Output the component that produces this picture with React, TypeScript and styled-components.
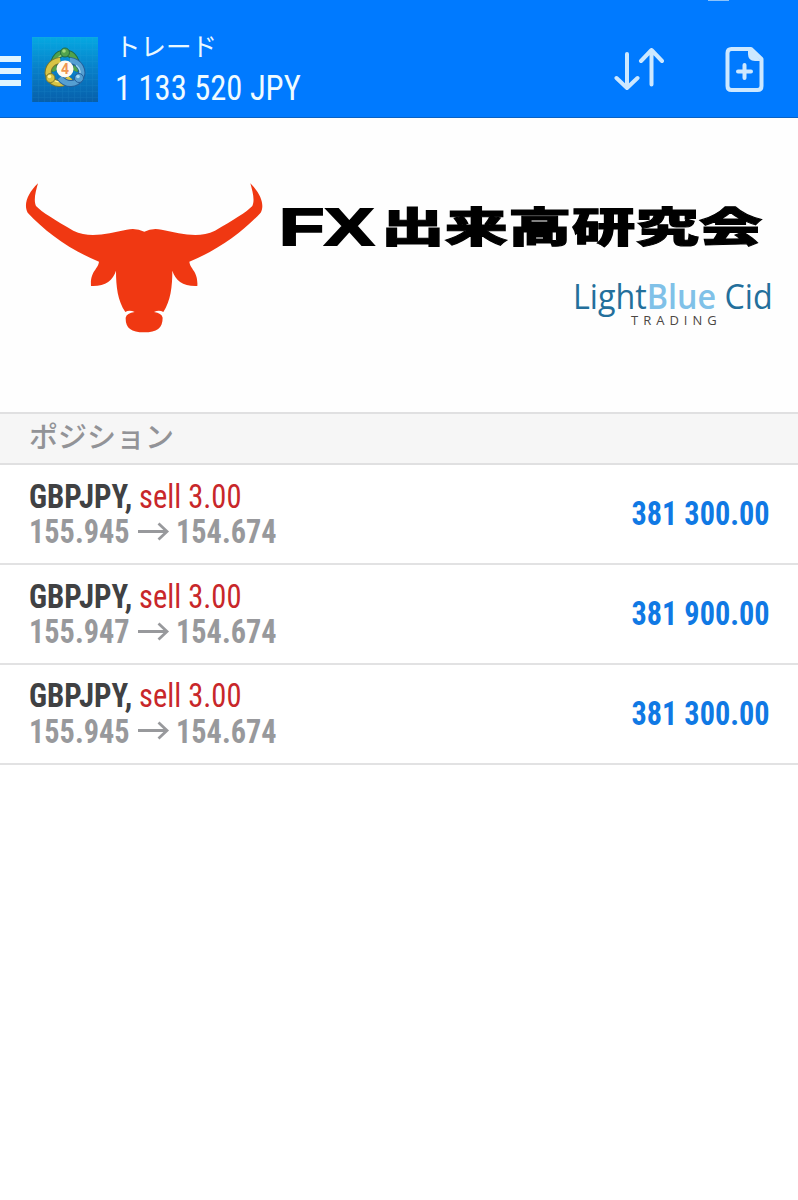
import React from "react";
import styled, { createGlobalStyle } from "styled-components";

const Global = createGlobalStyle`
  *, *::before, *::after { box-sizing: border-box; }
  body {
    margin: 0;
    background: #fff;
    font-family: Roboto, "Noto Sans CJK JP", sans-serif;
  }
`;

const Screen = styled.div`
  width: 798px;
  height: 1200px;
  background: #fff;
  overflow: hidden;
`;

const Header = styled.header`
  display: flex;
  height: 118px;
  background: #007aff;
  border-bottom: 1px solid #0a62c4;
  position: relative;
`;

const StatusMark = styled.i`
  position: absolute;
  top: 0;
  left: 708px;
  width: 21px;
  height: 1px;
  background: #8cc3fb;
`;

const Menu = styled.button`
  display: flex;
  flex-direction: column;
  gap: 6px;
  width: 21px;
  margin: 56px 11px 0 0;
  padding: 0;
  border: 0;
  background: none;
`;

const MenuBar = styled.span`
  height: 6px;
  background: #dff5ff;
`;

const AppIcon = styled.svg`
  width: 66px;
  height: 65px;
  margin-top: 37px;
`;

const Account = styled.div`
  display: flex;
  flex-direction: column;
  margin: 29px 0 0 17px;
  width: 480px;
  color: #e9f8ff;
`;

const Caption = styled.div`
  font: 400 25.5px/31px "Noto Sans CJK JP", sans-serif;
  white-space: nowrap;
`;

const Condensed = styled.span<{ $scale: number; $origin?: string }>`
  display: inline-block;
  white-space: pre;
  transform: scaleX(${(p) => p.$scale});
  transform-origin: ${(p) => p.$origin ?? "left"} center;
`;

const Balance = styled.div`
  height: 50px;
  font-size: 35px;
  line-height: 58px;
  font-stretch: 75%;
  color: #f0fbff;
`;

const Actions = styled.div`
  display: flex;
  gap: 60px;
  margin: 45px 0 0 17px;
`;

const Icon = styled.svg`
  flex: none;
  display: block;
`;

const Banner = styled.section`
  display: flex;
  height: 294px;
  background: #fefefe;
`;

const BullLogo = styled.svg`
  flex: none;
  width: 270px;
  height: 175px;
  margin: 52px 0 0 10px;
`;

const Brand = styled.div`
  flex: 1;
  display: flex;
  flex-direction: column;
  padding-top: 75px;
`;

const Title = styled.div`
  display: flex;
  height: 72px;
  margin-left: -1px;
  color: #000;
  line-height: 63px;
`;

const Latin = styled.span`
  width: 102px;
  font-family: "Liberation Sans", sans-serif;
  font-weight: 700;
  font-size: 52px;
  line-height: 68px;
  white-space: nowrap;
  -webkit-text-stroke: 1.8px #000;
`;

const Kanji = styled.span`
  font-family: "Noto Sans CJK JP", sans-serif;
  font-weight: 900;
  font-size: 41px;
  -webkit-text-stroke: 1px #000;
`;

const Partner = styled.div`
  height: 48px;
  padding-left: 293px;
  font-family: "Open Sans", sans-serif;
  font-size: 34.5px;
  font-weight: 500;
  line-height: 62px;
  color: #236f9b;
  white-space: nowrap;

  b {
    font-weight: 600;
    color: #80c1e8;
  }
`;

const PartnerSub = styled.div`
  margin-top: -1px;
  padding-left: 351px;
  font: 400 13px/16px "Open Sans", sans-serif;
  letter-spacing: 5px;
  color: #4c4744;
`;

const SectionTitle = styled.h2`
  height: 53px;
  margin: 0;
  padding-left: 29px;
  border-top: 2px solid #e0e0e1;
  border-bottom: 2px solid #e0e0e1;
  background: #f6f6f6;
  color: #929397;
  font: 500 29px/42px "Noto Sans CJK JP", sans-serif;
`;

const Row = styled.div`
  display: flex;
  justify-content: space-between;
  align-items: center;
  height: 99.9px;
  padding: 0 28px 0 29px;
  border-bottom: 2px solid #e2e2e3;
`;

const Line = styled.div`
  display: flex;
  align-items: center;
  height: 35.5px;
  font-size: 33px;
  font-stretch: 75%;
`;

const Cell = styled.span<{ $w: number; $color: string; $bold?: boolean }>`
  width: ${(p) => p.$w}px;
  color: ${(p) => p.$color};
  font-weight: ${(p) => (p.$bold ? 700 : 400)};
  white-space: nowrap;
`;

const Profit = styled.div`
  display: flex;
  justify-content: flex-end;
  width: 170px;
  font-size: 33px;
  font-weight: 700;
  font-stretch: 75%;
  color: #1079e4;
`;

const positions = [
  { open: "155.945", profit: "381 300.00" },
  { open: "155.947", profit: "381 900.00" },
  { open: "155.945", profit: "381 300.00" },
];

const Position = ({ open, profit }: { open: string; profit: string }) => (
  <Row>
    <div>
      <Line>
        <Cell $w={110} $color="#404143" $bold><Condensed $scale={0.932}>GBPJPY,</Condensed></Cell>
        <Cell $w={110} $color="#c8272a"><Condensed $scale={0.925}>sell 3.00</Condensed></Cell>
      </Line>
      <Line>
        <Cell $w={108} $color="#98999c" $bold><Condensed $scale={0.917}>{open}</Condensed></Cell>
        <Icon width="39" height="24" viewBox="0 0 39 24" fill="none" stroke="#98999c" strokeWidth="2.8">
          <path d="M1 11.5H30M21.5 3.5L30 11.5L21.5 19.5" />
        </Icon>
        <Cell $w={110} $color="#98999c" $bold><Condensed $scale={0.917}>154.674</Condensed></Cell>
      </Line>
    </div>
    <Profit><Condensed $scale={0.917} $origin="right">{profit}</Condensed></Profit>
  </Row>
);

const Ring = ({ x, y, angle, fill, dark, light }: { x: number; y: number; angle: number; fill: string; dark: string; light: string }) => (
  <g transform={`translate(${x} ${y}) rotate(${angle})`}>
    <path d="M-10 9C-14 -1 -8 -9 0 -9S14 -1 10 9" fill="none" stroke={dark} strokeWidth="7" />
    <path d="M-10 9C-14 -1 -8 -9 0 -9S14 -1 10 9" fill="none" stroke={fill} strokeWidth="5" />
    <path d="M-9 1C-8 -5 -4 -7 -1 -7" fill="none" stroke={light} strokeWidth="1.4" />
  </g>
);

const Bead = ({ x, y, fill, dark, light }: { x: number; y: number; fill: string; dark: string; light: string }) => (
  <g>
    <circle cx={x} cy={y} r="4.5" fill={fill} stroke={dark} />
    <circle cx={x - 1} cy={y - 1.5} r="1.8" fill={light} />
  </g>
);

export default function App() {
  return (
    <Screen>
      <Global />
      <Header>
        <StatusMark />
        <Menu aria-label="menu"><MenuBar /><MenuBar /><MenuBar /></Menu>
        <AppIcon viewBox="0 0 66 65">
          <defs>
            <linearGradient id="sky" x1="0.5" y1="0" x2="0.5" y2="1">
              <stop offset="0" stopColor="#05a9e2" />
              <stop offset="0.5" stopColor="#087fc8" />
              <stop offset="1" stopColor="#075faa" />
            </linearGradient>
            <pattern id="mesh" width="6" height="6" patternUnits="userSpaceOnUse">
              <path d="M0 .5H6M.5 0V6" stroke="#35aee3" strokeWidth=".6" opacity=".16" />
            </pattern>
          </defs>
          <rect width="66" height="65" fill="url(#sky)" />
          <rect width="66" height="65" fill="url(#mesh)" />
          <Ring x={33} y={25} angle={0} fill="#51a34c" dark="#216a46" light="#a2d77c" />
          <Ring x={25.500} y={36.500} angle={-120} fill="#d8c445" dark="#75752f" light="#fff39a" />
          <Ring x={40.500} y={36.500} angle={120} fill="#559fd2" dark="#245f9b" light="#a8dcf4" />
          <Bead x={33} y={15.500} fill="#51a34c" dark="#216a46" light="#a2d77c" />
          <Bead x={18.500} y={41} fill="#d8c445" dark="#75752f" light="#fff39a" />
          <Bead x={47} y={41} fill="#559fd2" dark="#245f9b" light="#a8dcf4" />
          <circle cx="33" cy="32" r="8.5" fill="#fffaf0" />
          <text x="33" y="37.2" textAnchor="middle" fontFamily="Roboto, sans-serif" fontWeight="700" fontSize="14" fill="#ee9550">4</text>
        </AppIcon>
        <Account>
          <Caption>トレード</Caption>
          <Balance><Condensed $scale={0.93}>1 133 520 JPY</Condensed></Balance>
        </Account>
        <Actions>
          <Icon width="52" height="48" viewBox="0 0 52 48" fill="none" stroke="#cde8ff" strokeWidth="4" strokeLinecap="round" strokeLinejoin="round">
            <path d="M15 9V43M4.500 33L15 43L25.500 33M39.500 39.500V5M29 16L39.500 5L50 16" />
          </Icon>
          <Icon width="40" height="50" viewBox="0 0 40 50" fill="none" stroke="#cde8ff" strokeWidth="4" strokeLinecap="round" strokeLinejoin="round">
            <path d="M7 4H27L37.500 14V41Q37.500 45 33.500 45H7.500Q3.500 45 3.500 41V8Q3.500 4 7.500 4Z" />
            <path d="M24 4V9Q24 16 31 16H37L26 4Z" fill="#cde8ff" stroke="none" />
            <path d="M20.500 20V33M14 26.500H27" />
          </Icon>
        </Actions>
      </Header>
      <Banner>
        <BullLogo viewBox="0 0 810 525" fill="#f03812">
          <path d="M84 40C52 70 40 105 53 128C105 184 180 240 267 275C264 299 240 303 243 348C285 350 309 331 318 302C318 350 323 392 346 426Q358 419 374 426Q350 429 347 443C346 474 363 487 402 487S458 474 458 443Q455 429 432 426Q447 419 460 426C482 392 487 350 487 302C496 331 520 350 562 348C565 303 541 299 538 275C625 240 700 184 752 128C765 105 752 70 721 40C728 65 735 90 727 108C710 126 670 150 615 182C565 207 510 190 455 179Q426 173 403 185Q379 173 350 179C295 190 240 207 190 182C135 150 95 126 78 108C70 90 77 65 84 40Z" />
        </BullLogo>
        <Brand>
          <Title>
            <Latin><Condensed $scale={1.43}>FX</Condensed></Latin>
            <Kanji><Condensed $scale={1.55}>出来高研究会</Condensed></Kanji>
          </Title>
          <Partner><Condensed $scale={0.935}>Light<b>Blue</b> Cid</Condensed></Partner>
          <PartnerSub>TRADING</PartnerSub>
        </Brand>
      </Banner>
      <SectionTitle>ポジション</SectionTitle>
      {positions.map((p, i) => <Position key={i} {...p} />)}
    </Screen>
  );
}
